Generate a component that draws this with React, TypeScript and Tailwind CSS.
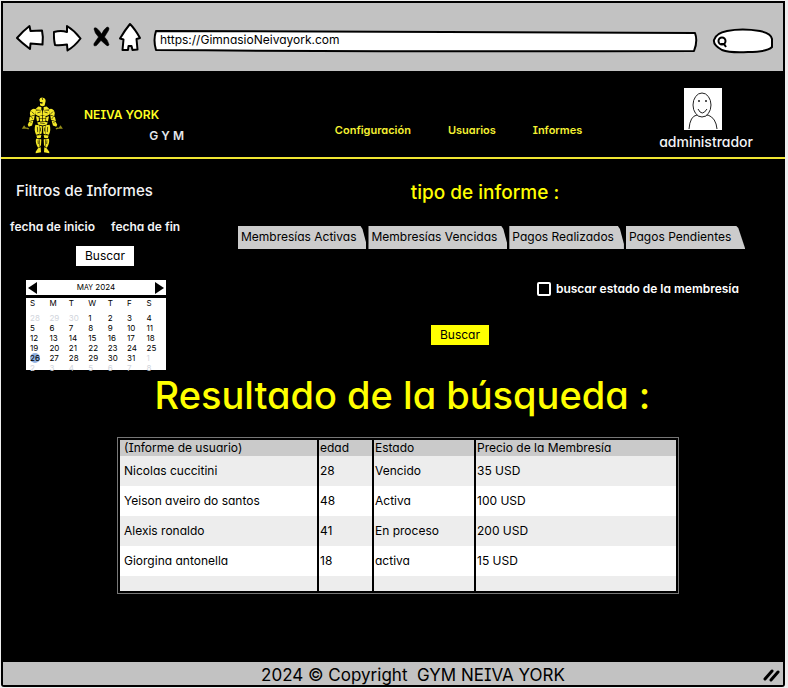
import React from 'react';

const tabs = ['Membresías Activas', 'Membresías Vencidas', 'Pagos Realizados', 'Pagos Pendientes'];

const weekdays = ['S', 'M', 'T', 'W', 'T', 'F', 'S'];

type Day = { n: number; out?: boolean; on?: boolean };

const weeks: Day[][] = [
  [{ n: 28, out: true }, { n: 29, out: true }, { n: 30, out: true }, { n: 1 }, { n: 2 }, { n: 3 }, { n: 4 }],
  [5, 6, 7, 8, 9, 10, 11].map((n) => ({ n })),
  [12, 13, 14, 15, 16, 17, 18].map((n) => ({ n })),
  [19, 20, 21, 22, 23, 24, 25].map((n) => ({ n })),
  [{ n: 26, on: true }, { n: 27 }, { n: 28 }, { n: 29 }, { n: 30 }, { n: 31 }, { n: 1, out: true }],
  [2, 3, 4, 5, 6, 7, 8].map((n) => ({ n, out: true })),
];

const columns = ['(Informe de usuario)', 'edad', 'Estado', 'Precio de la Membresía'];

const rows = [
  ['Nicolas cuccitini', '28', 'Vencido', '35 USD'],
  ['Yeison aveiro do santos', '48', 'Activa', '100 USD'],
  ['Alexis ronaldo', '41', 'En proceso', '200 USD'],
  ['Giorgina antonella', '18', 'activa', '15 USD'],
];

function Toolbar() {
  return (
    <div className="flex h-[72px] items-center border-2 border-black bg-[#c2c2c2] pr-[9px] pl-3">
      <div className="flex items-center gap-2">
        <button aria-label="Atrás">
          <svg viewBox="0 0 30 32" className="h-8 w-[30px]" fill="#fff" stroke="#000" strokeWidth="2" strokeLinejoin="round">
            <path d="M2 17 Q8 10 14.500 5 L15.500 10 L27 9.500 Q28.500 16 27.500 23.500 L15.500 22.500 L15 28 Q7 22 2 17 Z" />
          </svg>
        </button>
        <button aria-label="Adelante">
          <svg viewBox="0 0 30 32" className="h-8 w-[30px]" fill="#fff" stroke="#000" strokeWidth="2" strokeLinejoin="round">
            <path d="M1 11 Q8 9 14 11 L14 5 Q22 10 27.500 17.500 Q22 25 14.500 29.500 L14 23.500 Q7 24.500 2 24 Q0.500 17 1 11 Z" />
          </svg>
        </button>
        <button aria-label="Detener">
          <svg viewBox="1 0 19 32" className="h-8 w-[19px]">
            <path d="M4 8 Q4 6 6.500 7 Q10 10 11.500 13 Q14 8 17 6 Q20 6 18.500 9.500 L14.500 16 Q18 19 19 23.500 Q18.500 26 16 24 L11 19.500 L6.500 24.500 Q3 26 4 22.500 L8.500 16 Q4.500 12 4 8 Z" fill="#000" stroke="#000" strokeWidth="0.500" />
          </svg>
        </button>
        <button aria-label="Inicio">
          <svg viewBox="0 0 24 32" className="h-8 w-6" fill="#fff" stroke="#000" strokeWidth="2" strokeLinejoin="round">
            <path d="M12 3 Q17 8 22 17 L18.500 18 L19.500 28.500 L14.500 29 L13.500 25 L10.500 25 L10 29 L4.500 29 L5.500 18.500 L2 17.500 Q7 9 12 3 Z" />
          </svg>
        </button>
      </div>
      <div className="ml-[10px] mt-2 grid h-6 min-w-0 flex-1">
        <svg viewBox="0 0 546 24" preserveAspectRatio="none" className="col-start-1 row-start-1 h-6 w-full">
          <path
            d="M4 2 Q260 2 543 4 Q546 12 542 22 Q270 23 4 21 Q1 11 4 2 Z"
            fill="#fff" stroke="#000" strokeWidth="2" strokeLinejoin="round" vectorEffect="non-scaling-stroke"
          />
        </svg>
        <input
          aria-label="Dirección"
          defaultValue="https://GimnasioNeivayork.com"
          className="col-start-1 row-start-1 h-6 min-w-0 bg-transparent px-2 pb-1 text-xs text-black outline-none"
        />
      </div>
      <label className="ml-[14px] mt-2 grid h-7 w-[62px]">
        <svg viewBox="0 0 62 28" className="col-start-1 row-start-1 h-7 w-[62px]" stroke="#000" strokeWidth="2">
          <path d="M15 4 Q30 1 48 4 Q59 6 60 12 L60 20 Q55 25 36 25 Q18 26 10 23 Q1 18 2 13 Q4 6 15 4 Z" fill="#fff" />
          <circle cx="10" cy="14" r="3.500" fill="none" />
          <path d="M9 17 L12 17 L14 20" fill="none" />
        </svg>
        <input aria-label="Buscar en la web" className="col-start-1 row-start-1 ml-4 w-10 bg-transparent text-xs outline-none" />
      </label>
    </div>
  );
}

/* Bodybuilder emblem: muscle groups as separate yellow patches. */
function Logo() {
  return (
    <svg viewBox="22 28 126 172" className="h-[57px] w-[42px]" fill="#f5e928">
      <path d="M77 36 Q79 29 87 30 Q96 31 96 40 L93 54 Q86 58 79 53 L79 47 L86 48 L87 44 L79 43 Z" />
      <path d="M74 57 L83 58 L83 67 L64 66 Z M99 57 L90 58 L90 67 L109 66 Z" />
      <path d="M51 69 Q58 60 67 66 L66 80 L50 86 Q46 76 51 69 Z M121 69 Q114 60 106 66 L107 80 L122 86 Q126 76 121 69 Z" />
      <path d="M67 69 L85 68 L86 82 Q74 89 66 81 Z M88 68 L106 69 L107 81 Q98 89 87 82 Z" />
      <path d="M48 88 L63 83 L61 97 L46 101 Z M124 88 L110 83 L112 97 L127 101 Z" />
      <path d="M46 103 L59 99 L55 114 L45 118 L42 112 Z M126 103 L114 99 L118 114 L128 118 L131 112 Z" />
      <path d="M67 86 L75 88 L76 99 L70 102 Z M106 86 L98 88 L97 99 L103 102 Z" />
      <path d="M77 86 L86 84 L86 91 L78 92 Z M88 84 L96 86 L96 92 L88 91 Z M78 94 L86 93 L86 101 L79 102 Z M88 93 L96 94 L95 102 L88 101 Z" />
      <path d="M71 104 L86 103 L102 104 L100 111 L87 114 L73 111 Z" />
      <path d="M65 112 L76 113 L76 140 L67 142 Q60 127 65 112 Z M77 114 L86 117 L84 138 L77 142 Z M108 112 L97 113 L97 140 L106 142 Q113 127 108 112 Z M96 114 L88 117 L89 138 L96 142 Z" />
      <path d="M68 144 L83 143 L81 152 L70 152 Z M105 144 L90 143 L92 152 L103 152 Z" />
      <path d="M67 154 L75 154 L78 179 L73 181 Q64 167 67 154 Z M77 154 L83 156 L82 173 L79 178 Z M106 154 L98 154 L95 179 L100 181 Q109 167 106 154 Z M96 154 L90 156 L91 173 L94 178 Z" />
      <path d="M73 183 L81 180 L82 195 L66 198 L66 193 Z M99 183 L92 180 L91 195 L107 198 L107 193 Z" />
      <path d="M31 113 L39 124 L24 124 Z M141 113 L148 124 L133 124 Z M38 119 L46 122 L44 126 L38 124 Z M134 119 L126 122 L128 126 L134 124 Z" opacity="0.6" />
      <g stroke="#000" strokeWidth="2" fill="none">
        <path d="M54 72 L61 79 M118 72 L111 79 M71 76 L81 73 M92 73 L102 76 M53 90 L58 93 M119 90 L114 93 M50 106 L54 104 M119 104 L123 106 M71 118 L72 134 M102 118 L101 134 M81 120 L80 132 M92 120 L93 132 M79 106 L93 108 M73 159 L74 170 M100 159 L99 170 M86 31 L87 37" />
      </g>
    </svg>
  );
}

function Avatar() {
  return (
    <svg viewBox="0 0 38 42" className="mr-[6px] h-[42px] w-[38px]" fill="none" stroke="#222" strokeWidth="1">
      <rect width="38" height="42" fill="#fff" stroke="none" />
      <path d="M5 41 Q6 28 13 27 Q17 30 24 27 Q32 30 33 41" />
      <ellipse cx="18" cy="17" rx="9" ry="12" fill="#fff" />
      <path d="M14 21 Q18 29 23 21" />
      <path d="M15 12 v2 M22 12 v2" strokeWidth="1.500" />
    </svg>
  );
}

function Header() {
  return (
    <header className="flex h-[86px] items-center border-b-2 border-[#f0e632] pr-8 pl-5">
      <div className="mt-6 self-start">
        <Logo />
      </div>
      <div className="mt-5 ml-[21px] w-[100px] text-xs font-semibold">
        <p className="leading-[21px] text-[#ff2]">NEIVA YORK</p>
        <p className="text-right leading-[21px] text-gray-200">G Y M</p>
      </div>
      <nav className="mt-[30px] flex flex-1 justify-center gap-[37px] pl-[74px] text-[11px] font-semibold text-[#f5f032]">
        <a href="#configuracion">Configuración</a>
        <a href="#usuarios">Usuarios</a>
        <a href="#informes">Informes</a>
      </nav>
      <div className="flex flex-col items-center gap-[2px] pt-[10px] text-sm font-medium text-gray-100">
        <Avatar />
        <span>administrador</span>
      </div>
    </header>
  );
}

function Calendar() {
  return (
    <div className="mt-[14px] ml-[23px] w-[140px] text-[8px] text-black">
      <div className="mb-[3px] flex h-[15px] items-center justify-between bg-white px-[2px]">
        <button aria-label="Mes anterior">
          <svg viewBox="0 0 10 12" className="h-3 w-[10px]"><path d="M9 0 L9 12 L0 6 Z" /></svg>
        </button>
        <span className="text-[8px] leading-3">M<span className="text-[7px]">AY</span> 2024</span>
        <button aria-label="Mes siguiente">
          <svg viewBox="0 0 10 12" className="h-3 w-[10px]"><path d="M1 0 L1 12 L10 6 Z" /></svg>
        </button>
      </div>
      <div className="h-[72px] bg-white pl-1">
        <table className="w-full table-fixed border-collapse text-left leading-[10px]">
          <thead>
            <tr className="h-[15px] align-top">
              {weekdays.map((d, i) => <th key={i} className="p-0 font-normal">{d}</th>)}
            </tr>
          </thead>
          <tbody>
            {weeks.map((w, i) => (
              <tr key={i} className="h-[10px]">
                {w.map((d) => (
                  <td key={d.n} className={d.out ? 'p-0 text-gray-300' : 'p-0'}>
                    <span className={d.on ? 'rounded-full bg-[#8fb0e0]' : ''}>{d.n}</span>
                  </td>
                ))}
              </tr>
            ))}
          </tbody>
        </table>
      </div>
    </div>
  );
}

function Filters() {
  return (
    <aside className="w-[186px] shrink-0 pt-5 text-gray-100">
      <h2 className="pl-[13px] text-[15px] leading-6 font-medium">Filtros de Informes</h2>
      <div className="mt-[14px] flex gap-4 pl-[7px] text-xs leading-5 font-semibold">
        <span>fecha de inicio</span>
        <span>fecha de fin</span>
      </div>
      <button className="mt-[9px] ml-[73px] h-5 w-[58px] bg-white text-xs text-black">Buscar</button>
      <Calendar />
    </aside>
  );
}

function ReportType() {
  return (
    <section className="min-w-0 flex-1 pt-[22px]">
      <h2 className="pr-1 text-center text-[19px] leading-6 font-medium text-[#ff0]">tipo de informe :</h2>
      <div className="mt-[21px] ml-[49px] flex gap-[2px] text-xs text-black">
        {tabs.map((t, i) => (
          <button
            key={t}
            className={
              i === 3
                ? 'h-[23px] bg-[#ccc] pr-[14px] pb-[2px] pl-[3px] [clip-path:polygon(0_0,calc(100%-9px)_0,calc(100%-7px)_2px,100%_100%,0_100%)]'
                : 'h-[23px] bg-[#ccc] pr-[10px] pb-[2px] pl-[3px] [clip-path:polygon(0_0,calc(100%-6px)_0,calc(100%-4px)_3px,100%_18px,100%_100%,0_100%)]'
            }
          >
            {t}
          </button>
        ))}
      </div>
      <label className="mt-[30px] mr-[46px] flex items-center justify-end gap-[5px] text-xs leading-5 font-semibold text-white">
        <input type="checkbox" className="h-[14px] w-[14px] appearance-none rounded-[2px] border-2 border-white bg-black" />
        buscar estado de la membresía
      </label>
      <button className="mt-[26px] ml-[242px] h-5 w-[58px] bg-[#ff0] text-xs text-black">Buscar</button>
    </section>
  );
}

function Results() {
  return (
    <section className="flex-1 pb-8">
      <h1 className="pl-[19px] text-center text-[38px] leading-[48px] font-medium text-[#ff0]">Resultado de la búsqueda :</h1>
      <div className="mx-auto mt-[18px] w-[574px] max-w-full pr-px pl-[11px]">
        <div className="border border-[#777] p-[2px]">
          <table className="w-full table-fixed border-collapse text-left text-xs text-black">
            <colgroup>
              <col className="w-[198px]" />
              <col className="w-[55px]" />
              <col className="w-[102px]" />
              <col />
            </colgroup>
            <thead>
              <tr className="h-4 bg-[#cacaca] leading-4">
                {columns.map((c) => (
                  <th key={c} className="border-r-2 border-black p-0 pl-px font-normal first:pl-1 last:border-r-0">{c}</th>
                ))}
              </tr>
            </thead>
            <tbody>
              {rows.map((r) => (
                <tr key={r[0]} className="h-[30px] odd:bg-[#ededed] even:bg-white">
                  {r.map((c) => (
                    <td key={c} className="border-r-2 border-black p-0 pl-px first:pl-1 last:border-r-0">{c}</td>
                  ))}
                </tr>
              ))}
              <tr className="h-[15px] bg-[#ededed]">
                {columns.map((c) => <td key={c} className="border-r-2 border-black p-0 last:border-r-0" />)}
              </tr>
            </tbody>
          </table>
        </div>
      </div>
    </section>
  );
}

export default function App() {
  return (
    <div className="flex min-h-screen flex-col bg-[#eee] pt-px pr-[3px] pb-px pl-px font-['Inter','Liberation_Sans',sans-serif] [font-feature-settings:'cv08','cv11']">
      <div className="flex flex-1 flex-col rounded-[3px] bg-black">
        <Toolbar />
        <Header />
        <div className="flex pb-px pl-[2px]">
          <Filters />
          <ReportType />
        </div>
        <Results />
        <footer className="mx-[2px] mb-[2px] grid h-[23px] grid-cols-[1fr_auto_1fr] items-center bg-[#c2c2c2] pt-[3px] text-[17px] leading-5 text-black">
          <p className="col-start-2 whitespace-pre pl-10">2024 © Copyright  GYM NEIVA YORK</p>
          <svg viewBox="0 0 18 16" className="mr-[3px] h-4 w-[18px] justify-self-end" stroke="#000" strokeWidth="3" strokeLinecap="round">
            <path d="M3 12 L10 4 M9 13 L16 5" />
          </svg>
        </footer>
      </div>
    </div>
  );
}
